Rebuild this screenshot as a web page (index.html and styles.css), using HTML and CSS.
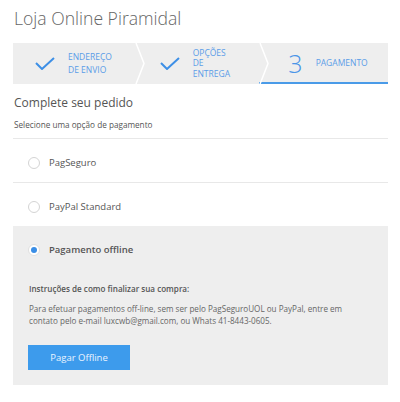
FILE: index.html
```html
<!DOCTYPE html>
<html lang="pt-BR">
<head>
<meta charset="utf-8">
<title>Loja Online Piramidal</title>
<link rel="stylesheet" href="styles.css">
</head>
<body>
<div class="page">
  <h1 class="title">Loja Online Piramidal</h1>

  <div class="steps">
    <div class="step step-1">
      <svg class="check" width="20" height="13" viewBox="0 0 20 13"><polyline points="1,6 7,12 19,1" fill="none" stroke="#3d8fe6" stroke-width="2"/></svg>
      <div class="step-text step-text-2l">ENDEREÇO<br>DE ENVIO</div>
      <svg class="chev" width="10" height="41" viewBox="0 0 10 41"><polyline points="1,0 9,20.5 1,41" fill="none" stroke="#fff" stroke-width="1.5"/></svg>
    </div>
    <div class="step step-2">
      <svg class="check" width="20" height="13" viewBox="0 0 20 13"><polyline points="1,6 7,12 19,1" fill="none" stroke="#3d8fe6" stroke-width="2"/></svg>
      <div class="step-text step-text-3l">OPÇÕES<br>DE<br>ENTREGA</div>
      <svg class="chev" width="10" height="41" viewBox="0 0 10 41"><polyline points="1,0 9,20.5 1,41" fill="none" stroke="#fff" stroke-width="1.5"/></svg>
    </div>
    <div class="step step-3 active">
      <span class="step-num">3</span>
      <div class="step-text">PAGAMENTO</div>
    </div>
  </div>

  <h2 class="subtitle">Complete seu pedido</h2>
  <p class="hint">Selecione uma opção de pagamento</p>

  <div class="options">
    <div class="option">
      <span class="radio"></span>
      <span class="option-label">PagSeguro</span>
    </div>
    <div class="option">
      <span class="radio"></span>
      <span class="option-label">PayPal Standard</span>
    </div>
    <div class="option option-selected">
      <div class="option-head">
        <span class="radio radio-on"><span class="dot"></span></span>
        <span class="option-label option-label-strong">Pagamento offline</span>
      </div>
      <div class="offline-body">
        <p class="instr-title">Instruções de como finalizar sua compra:</p>
        <p class="instr-text">Para efetuar pagamentos off-line, sem ser pelo PagSeguroUOL ou PayPal, entre em contato pelo e-mail luxcwb@gmail.com, ou Whats 41-8443-0605.</p>
        <button class="btn" type="button">Pagar Offline</button>
      </div>
    </div>
  </div>
</div>
</body>
</html>
```

FILE: styles.css
```css
* { box-sizing: border-box; }
html, body { margin: 0; padding: 0; background: #fff; }
body { font-family: "Open Sans", "Liberation Sans", sans-serif; color: #555; }

.page { width: 400px; padding: 0 12px 0 13px; }

.title {
  margin: 5px 0 0 1px;
  font-size: 17.6px;
  font-weight: 300;
  line-height: 27px;
  color: #666;
}

.steps {
  display: flex;
  margin-top: 11px;
  height: 41px;
  background: #eeeeee;
}
.step {
  position: relative;
  flex: 1;
  display: flex;
  align-items: center;
  gap: 13px;
}
.step-1 { padding-left: 22px; }
.step-2 { padding-left: 25px; }
.step-3 { padding-left: 29px; }
.step.active { box-shadow: inset 0 -2px 0 #4a9be8; }
.check { flex: none; }
.chev { position: absolute; right: -10px; top: 0; z-index: 1; }
.step-text {
  font-size: 8.5px;
  line-height: 12.5px;
  color: #5b9de8;
}
.step-text-3l { line-height: 10.5px; }
.step-num {
  font-size: 25px;
  font-weight: 300;
  line-height: 25px;
  color: #4a95e8;
}

.subtitle {
  margin: 10px 0 0 1px;
  font-size: 12px;
  font-weight: 400;
  line-height: 18px;
  color: #555;
}
.hint {
  margin: 7px 0 0 1px;
  font-size: 8.2px;
  line-height: 12px;
  color: #555;
}

.options { margin-top: 7px; }
.option {
  display: flex;
  align-items: center;
  gap: 9px;
  border-top: 1px solid #e8e8e8;
  padding: 17px 15px 12px;
}
.option-label {
  font-size: 9.5px;
  line-height: 14px;
  color: #555;
}
.option-label-strong { font-weight: 600; }
.radio {
  flex: none;
  width: 12px;
  height: 12px;
  border-radius: 50%;
  border: 1px solid #d4d4d4;
  background: #fff;
  display: flex;
  align-items: center;
  justify-content: center;
}
.radio-on { border-color: #e0e0e0; }
.dot { width: 6px; height: 6px; border-radius: 50%; background: #3a8ee6; }

.option-selected {
  display: block;
  background: #eeeeee;
  border-top-color: #eeeeee;
  padding: 16px 16px 15px 15px;
}
.option-head { display: flex; align-items: center; gap: 9px; }
.offline-body { padding-left: 1px; }
.instr-title {
  margin: 26px 0 0;
  font-size: 8.1px;
  font-weight: 600;
  line-height: 12px;
  color: #555;
}
.instr-text {
  margin: 8px 0 0;
  font-size: 8.1px;
  line-height: 11.5px;
  color: #666;
}
.btn {
  display: block;
  margin: 19px 0 0 -1px;
  width: 102px;
  height: 25px;
  border: 0;
  background: #3d9bec;
  color: #eaf4ff;
  font-family: "Open Sans", "Liberation Sans", sans-serif;
  font-size: 9.5px;
  padding: 0;
}
```
